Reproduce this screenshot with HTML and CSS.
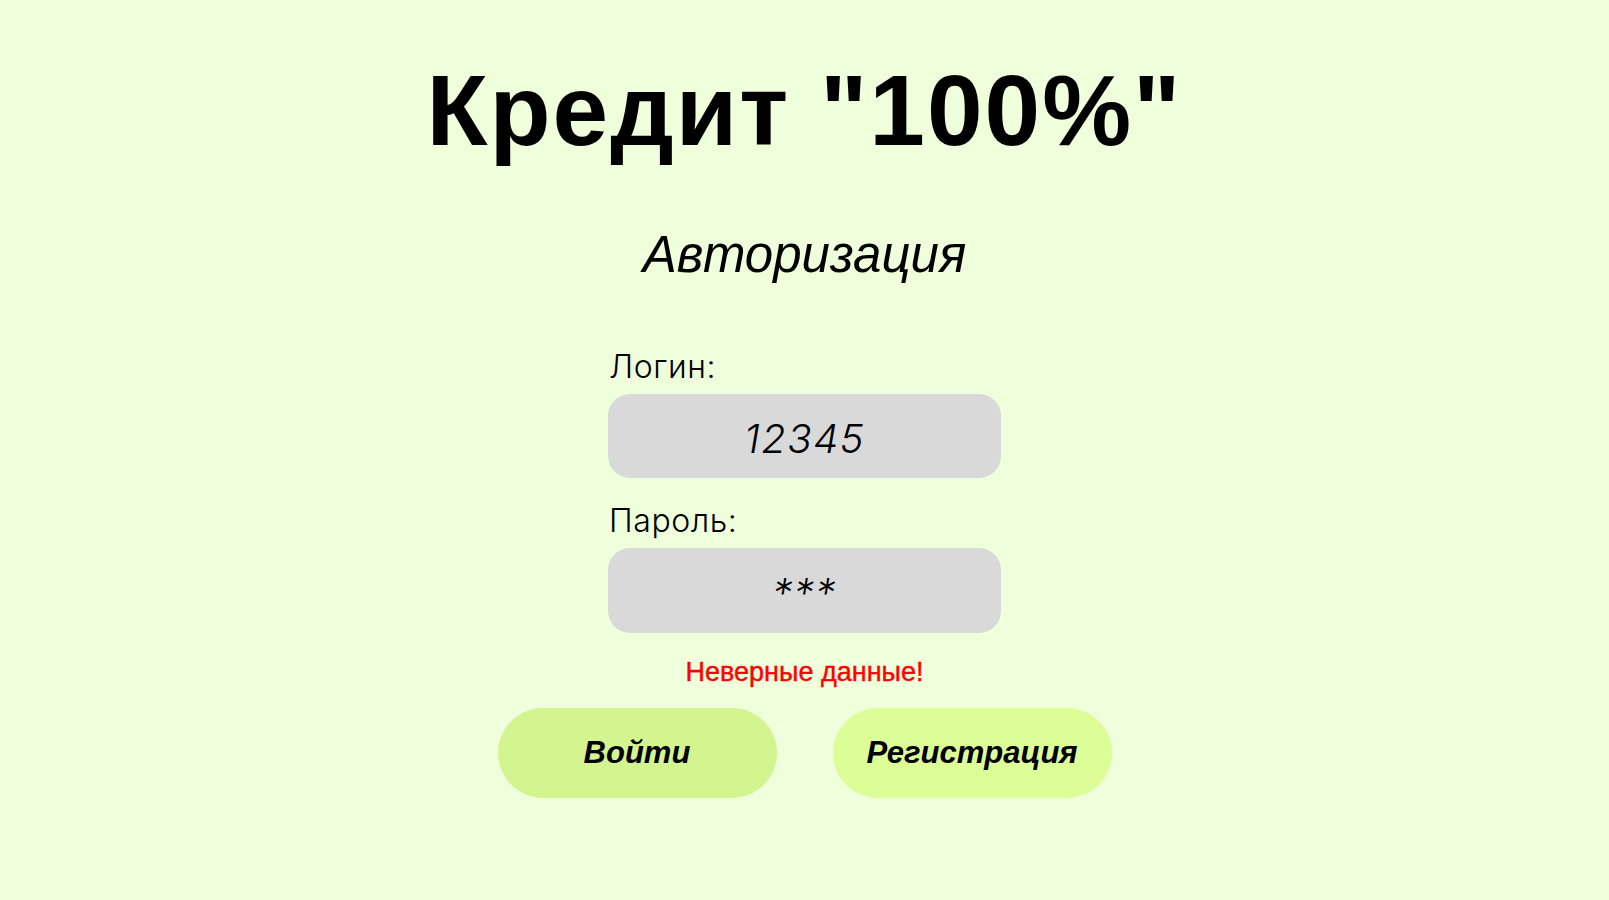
FILE: index.html
```html
<!DOCTYPE html>
<html lang="ru">
<head>
<meta charset="utf-8">
<title>Кредит "100%" — Авторизация</title>
<link rel="stylesheet" href="styles.css">
</head>
<body>
<main class="page">
  <h1 class="brand">Кредит "100%"</h1>
  <h2 class="subtitle">Авторизация</h2>
  <form class="auth-form">
    <label class="field-label">Логин:</label>
    <div class="field">12345</div>
    <label class="field-label">Пароль:</label>
    <div class="field field-password">***</div>
    <p class="error">Неверные данные!</p>
  </form>
  <div class="actions">
    <button class="btn btn-login" type="button">Войти</button>
    <button class="btn btn-register" type="button">Регистрация</button>
  </div>
</main>
</body>
</html>
```
FILE: styles.css
```css
html, body {
  margin: 0;
  padding: 0;
  background: #effedb;
  height: 100%;
}

.page {
  display: flex;
  flex-direction: column;
  align-items: center;
  min-height: 100vh;
  box-sizing: border-box;
  padding-top: 53px;
  color: #000;
}

.brand {
  margin: 0;
  font-family: "Liberation Sans", Arial, sans-serif;
  font-weight: 700;
  font-size: 100px;
  line-height: 115px;
  letter-spacing: 2px;
}

.subtitle {
  margin: 57px 0 0;
  font-family: "Liberation Sans", Arial, sans-serif;
  font-weight: 400;
  font-style: italic;
  font-size: 51px;
  line-height: 60px;
}

.auth-form {
  margin-top: 64px;
  width: 393px;
  display: flex;
  flex-direction: column;
}

.field-label {
  font-family: Inter, "Noto Sans", sans-serif;
  font-weight: 300;
  font-size: 32px;
  line-height: 36px;
  letter-spacing: 0.6px;
  margin-bottom: 9px;
  padding-left: 1px;
}

.field {
  height: 84px;
  border-radius: 22px;
  background: #d9d9d9;
  display: flex;
  align-items: center;
  justify-content: center;
  padding-top: 4px;
  box-sizing: border-box;
  font-family: Inter, "Noto Sans", sans-serif;
  font-weight: 300;
  font-style: italic;
  font-size: 40px;
  letter-spacing: 1.5px;
  margin-bottom: 25px;
}

.field-password {
  height: 85px;
  margin-bottom: 0;
}

.error {
  margin: 24px 0 0;
  text-align: center;
  color: #ff0000;
  font-family: "Liberation Sans", Arial, sans-serif;
  font-size: 27px;
  line-height: 30px;
  -webkit-text-stroke: 0.4px #ff0000;
}

.actions {
  margin-top: 21px;
  display: flex;
  gap: 56px;
}

.btn {
  width: 279px;
  height: 90px;
  border: none;
  border-radius: 45px;
  font-family: "Liberation Sans", Arial, sans-serif;
  font-weight: 700;
  font-style: italic;
  font-size: 31px;
  color: #000;
  padding: 0;
  cursor: pointer;
}

.btn-login {
  background: #d3f48e;
}

.btn-register {
  background: #ddfe96;
}
```
